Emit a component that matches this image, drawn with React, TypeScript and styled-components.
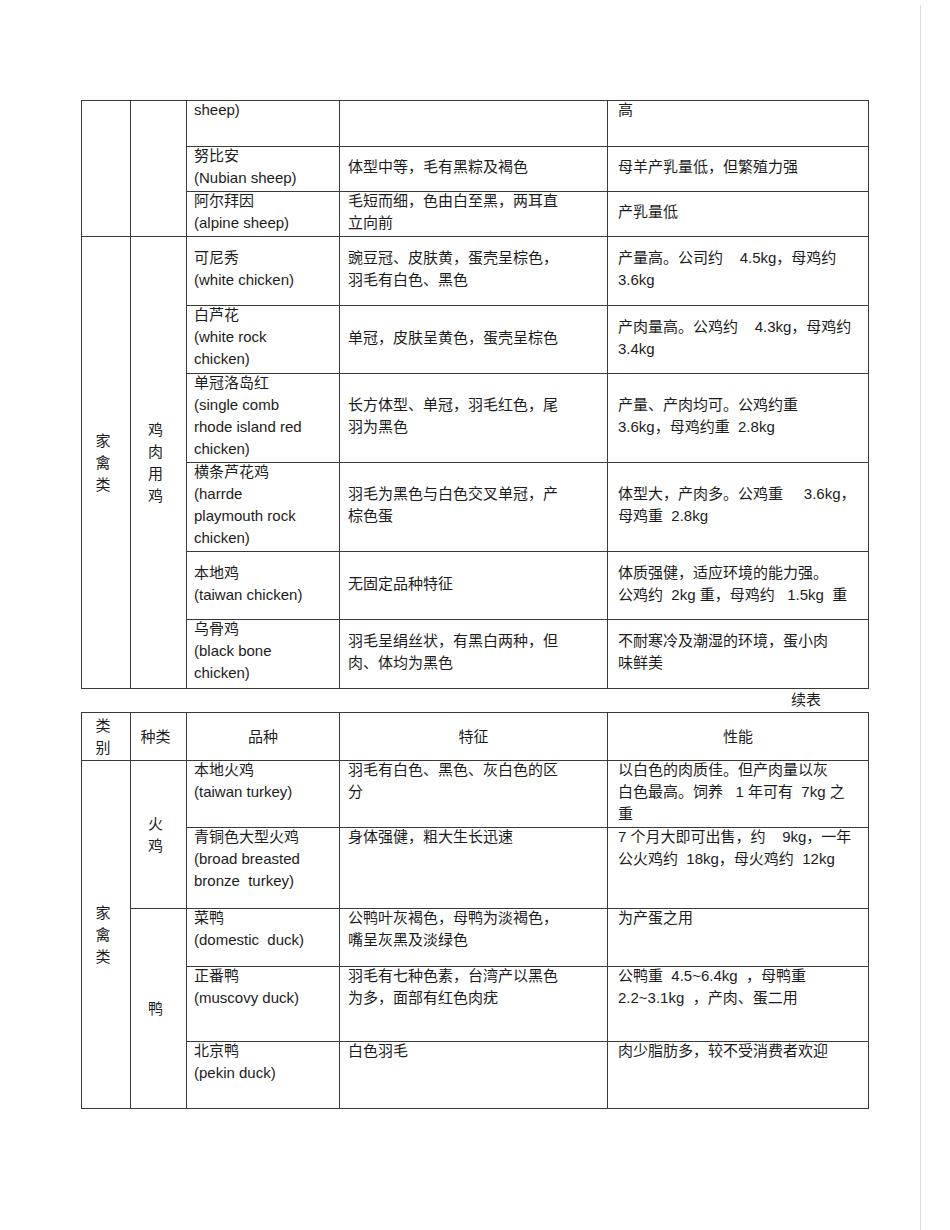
import React from "react";
import styled, { createGlobalStyle } from "styled-components";

const GlobalStyle = createGlobalStyle`
  html, body {
    margin: 0;
    padding: 0;
    background: #fff;
  }
  body {
    font-family: "Liberation Sans", "Noto Sans CJK SC", sans-serif;
    color: #1c1c1c;
  }
`;

const Page = styled.div`
  width: 950px;
  height: 1230px;
  overflow: hidden;
  display: flex;
`;

const Sheet = styled.div`
  width: 921px;
  margin-top: 5px;
  padding: 95px 0 0 81px;
  box-sizing: border-box;
  border-right: 1px solid #dcdcdc;
`;

const Table = styled.table`
  table-layout: fixed;
  border-collapse: collapse;
  width: 787px;
  font-size: 15px;
  line-height: 22px;
`;

const Row = styled.tr<{ $h: number }>`
  height: ${(p) => p.$h}px;
`;

type VAlign = "top" | "middle";

const Cell = styled.td<{ $pl?: number; $valign?: VAlign; $center?: boolean }>`
  border: 1px solid #3a3a3a;
  padding: 0 0 0 ${(p) => p.$pl ?? 7}px;
  vertical-align: ${(p) => p.$valign ?? "top"};
  text-align: ${(p) => (p.$center ? "center" : "left")};
  white-space: pre;
  overflow: hidden;
`;

// the source sets its text a touch above the line box
const Text = styled.span`
  display: block;
  margin: -2px 0 2px;
`;

const Stack = styled.td`
  border: 1px solid #3a3a3a;
  padding: 0 6px 0 0;
  vertical-align: middle;
  text-align: center;
  white-space: pre;
`;

const Note = styled.div`
  width: 787px;
  height: 23px;
  box-sizing: border-box;
  padding-right: 47px;
  text-align: right;
  font-size: 15px;
  line-height: 22px;
`;

type Entry = {
  h: number;
  name: string;
  feature: string;
  perf: string;
  nv?: VAlign;
  fv?: VAlign;
  pv?: VAlign;
};

const widths = [49, 56, 153, 268, 261];

const Cols = () => (
  <colgroup>
    {widths.map((w, i) => (
      <col key={i} style={{ width: w }} />
    ))}
  </colgroup>
);

const Texts = ({ e }: { e: Entry }) => (
  <>
    <Cell $valign={e.nv}>
      <Text>{e.name}</Text>
    </Cell>
    <Cell $valign={e.fv} $pl={8}>
      <Text>{e.feature}</Text>
    </Cell>
    <Cell $valign={e.pv} $pl={10}>
      <Text>{e.perf}</Text>
    </Cell>
  </>
);

const sheepRows: Entry[] = [
  { h: 46, name: "sheep)", feature: "", perf: "高" },
  {
    h: 45,
    name: "努比安\n(Nubian sheep)",
    feature: "体型中等，毛有黑粽及褐色",
    perf: "母羊产乳量低，但繁殖力强",
    fv: "middle",
    pv: "middle",
  },
  {
    h: 44,
    name: "阿尔拜因\n(alpine sheep)",
    feature: "毛短而细，色由白至黑，两耳直\n立向前",
    perf: "产乳量低",
    pv: "middle",
  },
];

const chickenRows: Entry[] = [
  {
    h: 69,
    name: "可尼秀\n(white chicken)",
    feature: "豌豆冠、皮肤黄，蛋壳呈棕色，\n羽毛有白色、黑色",
    perf: "产量高。公司约    4.5kg，母鸡约\n3.6kg",
    nv: "middle",
    fv: "middle",
    pv: "middle",
  },
  {
    h: 68,
    name: "白芦花\n(white rock\nchicken)",
    feature: "单冠，皮肤呈黄色，蛋壳呈棕色",
    perf: "产肉量高。公鸡约    4.3kg，母鸡约\n3.4kg",
    fv: "middle",
    pv: "middle",
  },
  {
    h: 89,
    name: "单冠洛岛红\n(single comb\nrhode island red\nchicken)",
    feature: "长方体型、单冠，羽毛红色，尾\n羽为黑色",
    perf: "产量、产肉均可。公鸡约重\n3.6kg，母鸡约重  2.8kg",
    fv: "middle",
    pv: "middle",
  },
  {
    h: 89,
    name: "横条芦花鸡\n(harrde\nplaymouth rock\nchicken)",
    feature: "羽毛为黑色与白色交叉单冠，产\n棕色蛋",
    perf: "体型大，产肉多。公鸡重     3.6kg，\n母鸡重  2.8kg",
    fv: "middle",
    pv: "middle",
  },
  {
    h: 68,
    name: "本地鸡\n(taiwan chicken)",
    feature: "无固定品种特征",
    perf: "体质强健，适应环境的能力强。\n公鸡约  2kg 重，母鸡约   1.5kg  重",
    nv: "middle",
    fv: "middle",
    pv: "middle",
  },
  {
    h: 69,
    name: "乌骨鸡\n(black bone\nchicken)",
    feature: "羽毛呈绢丝状，有黑白两种，但\n肉、体均为黑色",
    perf: "不耐寒冷及潮湿的环境，蛋小肉\n味鲜美",
    fv: "middle",
    pv: "middle",
  },
];

const turkeyRows: Entry[] = [
  {
    h: 67,
    name: "本地火鸡\n(taiwan turkey)",
    feature: "羽毛有白色、黑色、灰白色的区\n分",
    perf: "以白色的肉质佳。但产肉量以灰\n白色最高。饲养   1 年可有  7kg 之\n重",
  },
  {
    h: 81,
    name: "青铜色大型火鸡\n(broad breasted\nbronze  turkey)",
    feature: "身体强健，粗大生长迅速",
    perf: "7 个月大即可出售，约    9kg，一年\n公火鸡约  18kg，母火鸡约  12kg",
  },
];

const duckRows: Entry[] = [
  {
    h: 58,
    name: "菜鸭\n(domestic  duck)",
    feature: "公鸭叶灰褐色，母鸭为淡褐色，\n嘴呈灰黑及淡绿色",
    perf: "为产蛋之用",
  },
  {
    h: 75,
    name: "正番鸭\n(muscovy duck)",
    feature: "羽毛有七种色素，台湾产以黑色\n为多，面部有红色肉疣",
    perf: "公鸭重  4.5~6.4kg  ，母鸭重\n2.2~3.1kg  ，产肉、蛋二用",
  },
  {
    h: 67,
    name: "北京鸭\n(pekin duck)",
    feature: "白色羽毛",
    perf: "肉少脂肪多，较不受消费者欢迎",
  },
];

export default function App() {
  return (
    <Page>
      <GlobalStyle />
      <Sheet>
        <Table>
          <Cols />
          <tbody>
            {sheepRows.map((e, i) => (
              <Row key={`s${i}`} $h={e.h}>
                {i === 0 && (
                  <>
                    <Stack rowSpan={3} />
                    <Stack rowSpan={3} />
                  </>
                )}
                <Texts e={e} />
              </Row>
            ))}
            {chickenRows.map((e, i) => (
              <Row key={`c${i}`} $h={e.h}>
                {i === 0 && (
                  <>
                    <Stack rowSpan={6}>{"家\n禽\n类"}</Stack>
                    <Stack rowSpan={6}>{"鸡\n肉\n用\n鸡"}</Stack>
                  </>
                )}
                <Texts e={e} />
              </Row>
            ))}
          </tbody>
        </Table>

        <Note>续表</Note>

        <Table>
          <Cols />
          <tbody>
            <Row $h={48}>
              <Stack>{"类\n别"}</Stack>
              <Stack>种类</Stack>
              <Cell $valign="middle" $center $pl={0}>品种</Cell>
              <Cell $valign="middle" $center $pl={0}>特征</Cell>
              <Cell $valign="middle" $center $pl={0}>性能</Cell>
            </Row>
            {turkeyRows.map((e, i) => (
              <Row key={`t${i}`} $h={e.h}>
                {i === 0 && (
                  <>
                    <Stack rowSpan={5}>{"家\n禽\n类"}</Stack>
                    <Stack rowSpan={2}>{"火\n鸡"}</Stack>
                  </>
                )}
                <Texts e={e} />
              </Row>
            ))}
            {duckRows.map((e, i) => (
              <Row key={`d${i}`} $h={e.h}>
                {i === 0 && <Stack rowSpan={3}>鸭</Stack>}
                <Texts e={e} />
              </Row>
            ))}
          </tbody>
        </Table>
      </Sheet>
    </Page>
  );
}
